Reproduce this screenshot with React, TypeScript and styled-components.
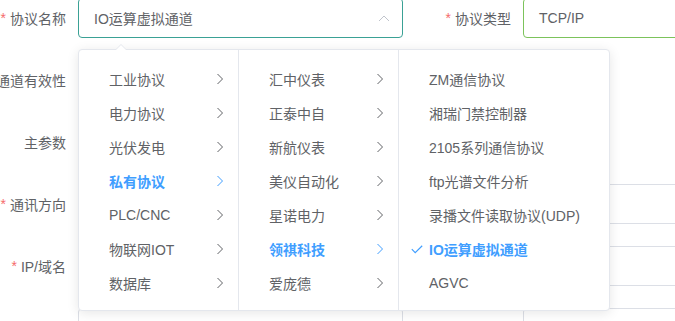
import React from 'react'
import styled, { createGlobalStyle } from 'styled-components'

const GlobalStyle = createGlobalStyle`
  html, body {
    margin: 0;
    padding: 0;
    background: #fff;
    overflow: hidden;
  }
  body {
    font-family: "Liberation Sans", "Noto Sans CJK SC", sans-serif;
    font-size: 14px;
    color: #606266;
  }
`

const Page = styled.div`
  width: 675px;
  height: 321px;
  overflow: hidden;
`

const FormGrid = styled.div`
  display: grid;
  grid-template-columns: 78px 325px 120px 240px;
  grid-auto-rows: 40px;
  row-gap: 22px;
  margin-top: -2px;
`

const Label = styled.label`
  display: flex;
  align-items: center;
  justify-content: flex-end;
  padding-right: 12px;
  white-space: nowrap;
  font-size: 14px;
  color: #606266;
`

const Star = styled.span`
  color: #f56c6c;
  margin-right: 4px;
`

const Field = styled.div`
  position: relative;
`

const Input = styled.div<{ $tone?: 'focus' | 'success' }>`
  box-sizing: border-box;
  height: 40px;
  display: flex;
  align-items: center;
  padding: 0 12px 0 15px;
  border: 1px solid
    ${(p) =>
      p.$tone === 'focus' ? '#3aa195' : p.$tone === 'success' ? '#7cc35b' : '#dcdfe6'};
  border-radius: 4px;
  background: #fff;
  color: #606266;
  font-size: 14px;
`

const InputText = styled.span`
  flex: 1;
`

const Caret = styled.svg`
  width: 12px;
  height: 8px;
`

const Panel = styled.div`
  position: absolute;
  top: calc(100% + 11px);
  left: 0;
  z-index: 10;
  display: flex;
  background: #fff;
  border: 1px solid #e4e7ed;
  border-radius: 4px;
  box-shadow: 0 2px 12px 0 rgba(0, 0, 0, 0.1);

  &::before,
  &::after {
    content: '';
    position: absolute;
    left: 36px;
    border: 6px solid transparent;
    border-top-width: 0;
  }
  &::before {
    top: -6px;
    border-bottom-color: #e4e7ed;
  }
  &::after {
    top: -5px;
    border-bottom-color: #fff;
  }
`

const Menu = styled.ul<{ $width: number; $last?: boolean }>`
  list-style: none;
  margin: 0;
  padding: 12px 0 10px;
  box-sizing: border-box;
  width: ${(p) => p.$width}px;
  border-right: ${(p) => (p.$last ? 'none' : '1px solid #e4e7ed')};
`

const Node = styled.li<{ $active?: boolean }>`
  position: relative;
  display: flex;
  align-items: center;
  height: 34px;
  padding: 0 14px 0 12px;
  font-size: 14px;
  white-space: nowrap;
  color: ${(p) => (p.$active ? '#409eff' : '#606266')};
  font-weight: ${(p) => (p.$active ? 700 : 400)};
`

const Prefix = styled.span`
  width: 18px;
  display: flex;
  align-items: center;
`

const NodeLabel = styled.span`
  flex: 1;
`

const Chevron = ({ color }: { color: string }) => (
  <svg width="8" height="12" viewBox="0 0 8 12">
    <path d="M1.5 1 L6.5 6 L1.5 11" fill="none" stroke={color} strokeWidth="1" />
  </svg>
)

const Check = () => (
  <svg width="12" height="9" viewBox="0 0 12 9">
    <path d="M0.8 4.2 L4.2 7.6 L11.2 0.8" fill="none" stroke="#409eff" strokeWidth="1.2" />
  </svg>
)

type Item = { label: string; active?: boolean }

const categories: Item[] = [
  { label: '工业协议' },
  { label: '电力协议' },
  { label: '光伏发电' },
  { label: '私有协议', active: true },
  { label: 'PLC/CNC' },
  { label: '物联网IOT' },
  { label: '数据库' },
]

const vendors: Item[] = [
  { label: '汇中仪表' },
  { label: '正泰中自' },
  { label: '新航仪表' },
  { label: '美仪自动化' },
  { label: '星诺电力' },
  { label: '领祺科技', active: true },
  { label: '爱庞德' },
]

const protocols: Item[] = [
  { label: 'ZM通信协议' },
  { label: '湘瑞门禁控制器' },
  { label: '2105系列通信协议' },
  { label: 'ftp光谱文件分析' },
  { label: '录播文件读取协议(UDP)' },
  { label: 'IO运算虚拟通道', active: true },
  { label: 'AGVC' },
]

function CascaderMenu({ items, width, leaf }: { items: Item[]; width: number; leaf?: boolean }) {
  return (
    <Menu $width={width} $last={leaf}>
      {items.map((it) => (
        <Node key={it.label} $active={it.active}>
          <Prefix>{leaf && it.active ? <Check /> : null}</Prefix>
          <NodeLabel>{it.label}</NodeLabel>
          {!leaf && <Chevron color={it.active ? '#409eff' : '#606266'} />}
        </Node>
      ))}
    </Menu>
  )
}

export default function App() {
  return (
    <Page>
      <GlobalStyle />
      <FormGrid>
        <Label>
          <Star>*</Star>协议名称
        </Label>
        <Field>
          <Input $tone="focus">
            <InputText>IO运算虚拟通道</InputText>
            <Caret viewBox="0 0 12 8">
              <path d="M1 7 L6 2 L11 7" fill="none" stroke="#c0c4cc" strokeWidth="1" />
            </Caret>
          </Input>
          <Panel>
            <CascaderMenu items={categories} width={160} />
            <CascaderMenu items={vendors} width={160} />
            <CascaderMenu items={protocols} width={210} leaf />
          </Panel>
        </Field>
        <Label>
          <Star>*</Star>协议类型
        </Label>
        <Field>
          <Input $tone="success">
            <InputText>TCP/IP</InputText>
          </Input>
        </Field>

        <Label>通道有效性</Label>
        <Field />
        <Label />
        <Field />

        <Label>主参数</Label>
        <Field />
        <Label />
        <Field />

        <Label>
          <Star>*</Star>通讯方向
        </Label>
        <Field>
          <Input />
        </Field>
        <Label />
        <Field>
          <Input />
        </Field>

        <Label>
          <Star>*</Star>IP/域名
        </Label>
        <Field>
          <Input />
        </Field>
        <Label />
        <Field>
          <Input />
        </Field>

        <Label />
        <Field>
          <Input />
        </Field>
        <Label />
        <Field>
          <Input />
        </Field>
      </FormGrid>
    </Page>
  )
}
